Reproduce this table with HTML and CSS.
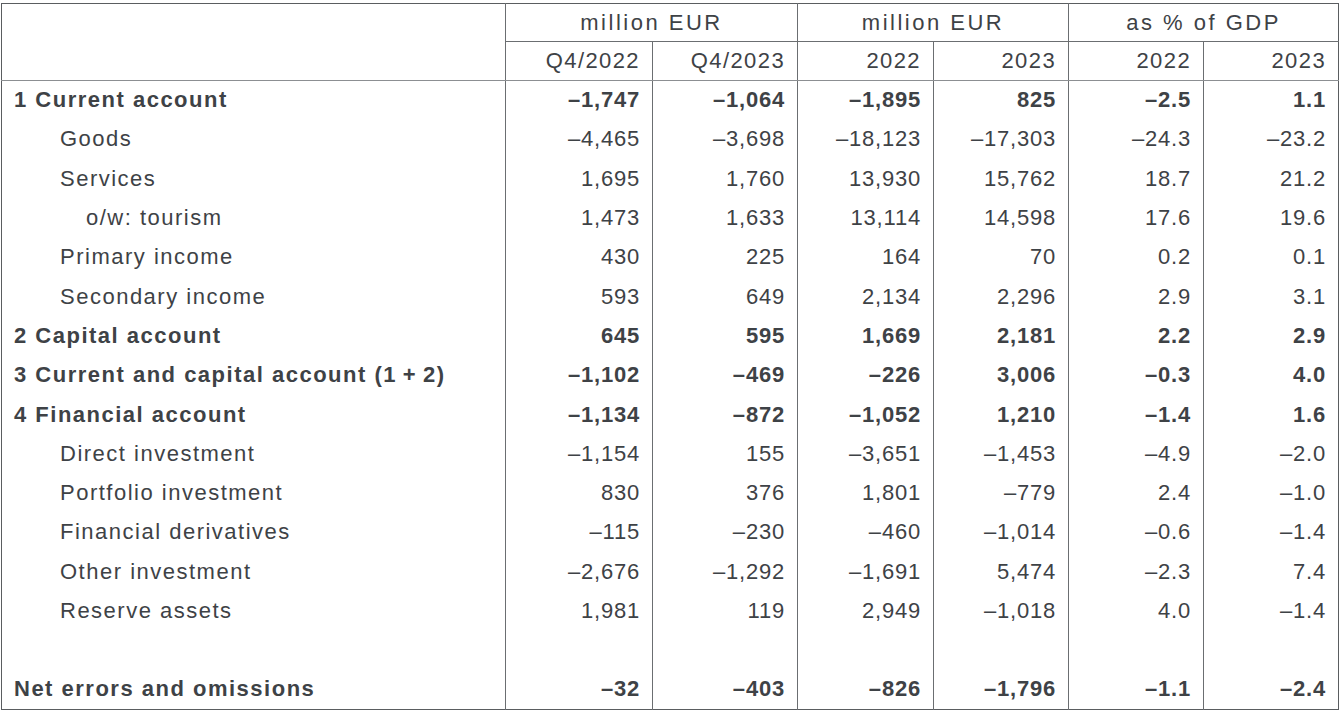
FILE: index.html
```html
<!DOCTYPE html>
<html lang="en">
<head>
<meta charset="utf-8">
<title>Balance of payments</title>
<link rel="stylesheet" href="styles.css">
</head>
<body>
<table class="bop">
  <colgroup>
    <col class="c-label">
    <col class="c1"><col class="c2"><col class="c3"><col class="c4"><col class="c5"><col class="c6">
  </colgroup>
  <thead>
    <tr class="h1">
      <th class="lab" rowspan="2"></th>
      <th colspan="2">million EUR</th>
      <th colspan="2">million EUR</th>
      <th colspan="2">as % of GDP</th>
    </tr>
    <tr class="h2">
      <th>Q4/2022</th><th>Q4/2023</th><th>2022</th><th>2023</th><th>2022</th><th>2023</th>
    </tr>
  </thead>
  <tbody>
    <tr class="b"><td class="lab">1 Current account</td><td>–1,747</td><td>–1,064</td><td>–1,895</td><td>825</td><td>–2.5</td><td>1.1</td></tr>
    <tr><td class="lab i1">Goods</td><td>–4,465</td><td>–3,698</td><td>–18,123</td><td>–17,303</td><td>–24.3</td><td>–23.2</td></tr>
    <tr><td class="lab i1">Services</td><td>1,695</td><td>1,760</td><td>13,930</td><td>15,762</td><td>18.7</td><td>21.2</td></tr>
    <tr><td class="lab i2">o/w: tourism</td><td>1,473</td><td>1,633</td><td>13,114</td><td>14,598</td><td>17.6</td><td>19.6</td></tr>
    <tr><td class="lab i1">Primary income</td><td>430</td><td>225</td><td>164</td><td>70</td><td>0.2</td><td>0.1</td></tr>
    <tr><td class="lab i1">Secondary income</td><td>593</td><td>649</td><td>2,134</td><td>2,296</td><td>2.9</td><td>3.1</td></tr>
    <tr class="b"><td class="lab">2 Capital account</td><td>645</td><td>595</td><td>1,669</td><td>2,181</td><td>2.2</td><td>2.9</td></tr>
    <tr class="b"><td class="lab">3 Current and capital account (1&#8201;+&#8201;2)</td><td>–1,102</td><td>–469</td><td>–226</td><td>3,006</td><td>–0.3</td><td>4.0</td></tr>
    <tr class="b"><td class="lab">4 Financial account</td><td>–1,134</td><td>–872</td><td>–1,052</td><td>1,210</td><td>–1.4</td><td>1.6</td></tr>
    <tr><td class="lab i1">Direct investment</td><td>–1,154</td><td>155</td><td>–3,651</td><td>–1,453</td><td>–4.9</td><td>–2.0</td></tr>
    <tr><td class="lab i1">Portfolio investment</td><td>830</td><td>376</td><td>1,801</td><td>–779</td><td>2.4</td><td>–1.0</td></tr>
    <tr><td class="lab i1">Financial derivatives</td><td>–115</td><td>–230</td><td>–460</td><td>–1,014</td><td>–0.6</td><td>–1.4</td></tr>
    <tr><td class="lab i1">Other investment</td><td>–2,676</td><td>–1,292</td><td>–1,691</td><td>5,474</td><td>–2.3</td><td>7.4</td></tr>
    <tr><td class="lab i1">Reserve assets</td><td>1,981</td><td>119</td><td>2,949</td><td>–1,018</td><td>4.0</td><td>–1.4</td></tr>
    <tr class="blank"><td class="lab"></td><td></td><td></td><td></td><td></td><td></td><td></td></tr>
    <tr class="b"><td class="lab">Net errors and omissions</td><td>–32</td><td>–403</td><td>–826</td><td>–1,796</td><td>–1.1</td><td>–2.4</td></tr>
  </tbody>
</table>
</body>
</html>
```
FILE: styles.css
```css
html, body {
  margin: 0;
  padding: 0;
  background: #ffffff;
}

body {
  padding: 3px 2px 0 1px;
  font-family: "Liberation Sans", Arial, sans-serif;
  color: #3e4246;
}

.bop {
  border-collapse: collapse;
  table-layout: fixed;
  width: 1337px;
  border: 1px solid #5a5d60;
  font-size: 22px;
  letter-spacing: 0.8px;
}

.c-label { width: 504px; }
.c1 { width: 147px; }
.c2 { width: 145px; }
.c3 { width: 136px; }
.c4 { width: 135px; }
.c5 { width: 135px; }
.c6 { width: 135px; }

.bop th,
.bop td {
  padding: 0 12px 0 12px;
  height: 39.3px;
  box-sizing: border-box;
  text-align: right;
  font-weight: normal;
  white-space: nowrap;
  border-left: 1px solid #6b6e71;
}

.bop .lab {
  text-align: left;
  border-left: none;
  letter-spacing: 1.5px;
}

.bop thead th {
  text-align: center;
}

.bop .h1 th {
  height: 38px;
  letter-spacing: 2.5px;
  border-bottom: 1px solid #6b6e71;
}

.bop .h2 th {
  text-align: right;
  height: 39px;
  letter-spacing: 1.4px;
  border-bottom: 1px solid #8c8f92;
}

.bop .h1 th.lab {
  border-bottom: 1px solid #8c8f92;
}

.bop .b td {
  font-weight: bold;
}

.bop .i1 { padding-left: 58px; }
.bop .i2 { padding-left: 84px; }
```
